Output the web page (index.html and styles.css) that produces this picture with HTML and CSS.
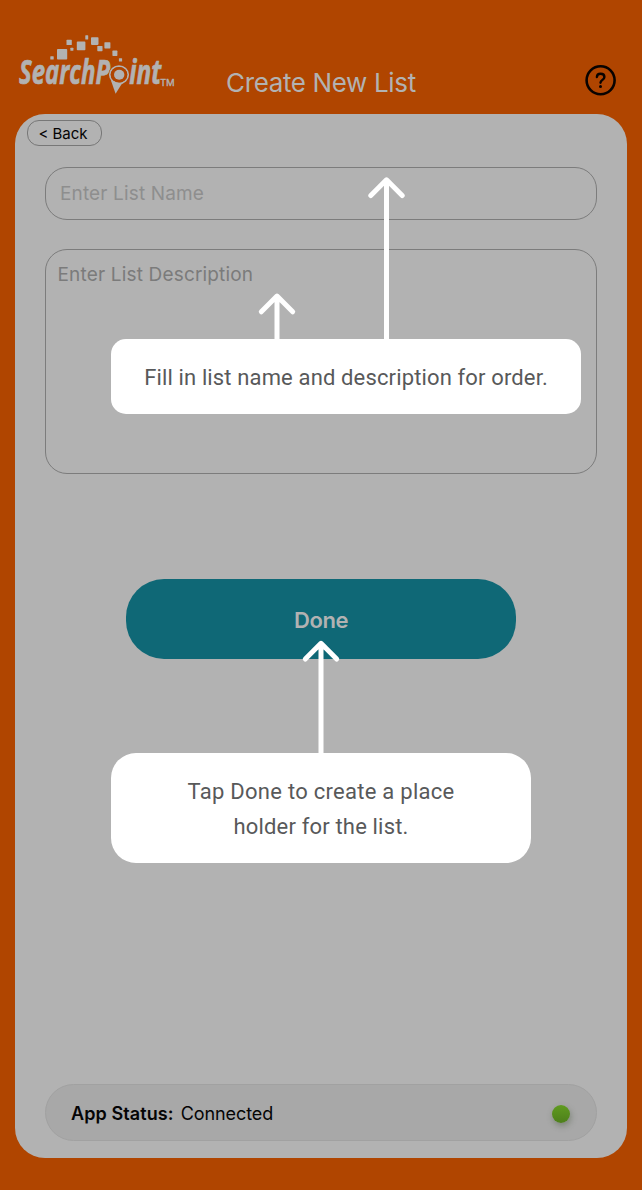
FILE: index.html
```html
<!DOCTYPE html>
<html lang="en">
<head>
<meta charset="utf-8">
<title>Create New List</title>
<link rel="stylesheet" href="styles.css">
</head>
<body>
<div class="app">
  <header class="header">
    <svg class="logo" width="170" height="80" viewBox="10 25 170 80" role="img" aria-label="SearchPoint">
      <g fill="#b2b2b2">
        <rect x="50.3" y="56.2" width="3.4" height="3.4" rx=".5"/>
        <rect x="57" y="49" width="10.2" height="10.6" rx=".8"/>
        <rect x="66.5" y="39.8" width="5.3" height="5.3" rx=".6"/>
        <rect x="70.4" y="47.7" width="3" height="3" rx=".5"/>
        <rect x="76.8" y="41.6" width="8.6" height="8.6" rx=".8"/>
        <rect x="85.3" y="35.3" width="2.9" height="4.3" rx=".5"/>
        <rect x="91" y="37.3" width="7.5" height="7.6" rx=".8"/>
        <rect x="97.3" y="46" width="5.2" height="5.2" rx=".6"/>
        <rect x="104.4" y="42.2" width="6" height="6.2" rx=".6"/>
        <rect x="112.4" y="50.6" width="5" height="5.3" rx=".6"/>
        <rect x="118.9" y="58.2" width="3.2" height="3.2" rx=".5"/>
        <text class="logo-word"><tspan x="19" y="84" textLength="91" lengthAdjust="spacingAndGlyphs">SearchP</tspan><tspan x="129.3" y="84" textLength="32" lengthAdjust="spacingAndGlyphs">int</tspan><tspan class="logo-mark" x="160.6" y="86" textLength="14" lengthAdjust="spacingAndGlyphs">TM</tspan></text>
      </g>
      <ellipse cx="119" cy="74.8" rx="10.6" ry="10" fill="#b04500"/>
      <ellipse cx="119" cy="74.8" rx="9.2" ry="8.7" fill="#b04500" stroke="#b2b2b2" stroke-width="1.7"/>
      <path d="M110.8 80 115.6 93.8 122.2 83.2Z" fill="#b2b2b2"/>
      <ellipse cx="119" cy="74.8" rx="8.2" ry="7.7" fill="#b04500"/>
      <ellipse cx="119.2" cy="74.8" rx="5.2" ry="5" fill="#b2b2b2"/>
    </svg>
    <h1 class="title">Create New List</h1>
    <svg class="help" width="32" height="32" viewBox="0 0 32 32" fill="none" stroke="#090300" stroke-width="2.6" stroke-linecap="round" role="img" aria-label="Help">
      <circle cx="15.6" cy="16.2" r="14"/>
      <path stroke-width="2.4" d="M11.9 13C12 10.8 13.5 9.8 15.5 9.8s3.9 1.1 3.9 3.2c0 2.8-3.7 2.9-3.9 5.7"/>
      <circle cx="15.5" cy="22.6" r="1.5" fill="#090300" stroke="none"/>
    </svg>
  </header>
  <main class="card">
    <button class="back">&lt; Back</button>
    <div class="field name">Enter List Name</div>
    <div class="field description">Enter List Description</div>
    <button class="done">Done</button>
    <div class="status"><b>App Status:</b><span class="state">Connected</span><i class="dot"></i></div>
  </main>
  <svg class="arrows" width="642" height="1190" viewBox="0 0 642 1190" aria-hidden="true">
    <path d="M386.5 342V180M370.8 195.5 386.5 179.8 402.2 195.5"/>
    <path d="M277 342V297M261.3 311.8 277 296.1 292.7 311.8"/>
    <path d="M321 756V644M305.3 659 321 643.3 336.7 659"/>
  </svg>
  <div class="callout callout-fields"><span>Fill in list name and description for order.</span></div>
  <div class="callout callout-done"><span class="line-one">Tap Done to create a place</span><span class="line-two">holder for the list.</span></div>
</div>
</body>
</html>
```
FILE: styles.css
```css
* { box-sizing: border-box; }
body { margin: 0; }
.app {
  position: relative;
  width: 642px;
  height: 1190px;
  padding: 0 15px 32px;
  background: #b04500;
  font-family: Inter, sans-serif;
  display: flex;
  flex-direction: column;
}
.header {
  height: 114px;
  flex: none;
  display: grid;
  grid-template-columns: 170px 1fr 32px;
  align-items: start;
  margin-left: -5px;
  margin-right: -4px;
  padding-right: 14px;
}
.logo { margin-top: 25px; }
.logo-word { font: italic 700 34.5px "Open Sans", sans-serif; stroke: #b2b2b2; stroke-width: .7px; }
.logo-mark { font: 9px "Open Sans", sans-serif; stroke-width: .4px; }
.title {
  margin: 66px 0 0 46px;
  font-size: 26px;
  line-height: 33px;
  font-weight: 400;
  letter-spacing: -.36px;
  color: #b2b2b2;
  white-space: nowrap;
}
.help { margin-top: 64px; }
.card {
  flex: 1;
  border-radius: 30px;
  background: #b2b2b2;
  padding: 6px 30px 17px;
  display: flex;
  flex-direction: column;
}
button { font-family: inherit; padding: 0; }
.back {
  width: 75px;
  height: 26px;
  flex: none;
  margin-left: -18px;
  padding-right: 3px;
  border: 1px solid #777;
  border-radius: 12px;
  background: transparent;
  color: #050505;
  font-size: 15px;
}
.field {
  flex: none;
  border: 1px solid #7c7c7c;
  border-radius: 22px;
  font-size: 19px;
  line-height: 24px;
  letter-spacing: .14px;
}
.name { height: 53px; margin-top: 21px; padding: 14px; color: #8e8e8e; }
.description { height: 225px; margin-top: 29px; padding: 13px 11.5px; color: #7b7b7b; letter-spacing: .17px; }
.done {
  flex: none;
  width: 390px;
  height: 80px;
  margin: 105px auto 0;
  padding-top: 1px;
  border: 0;
  border-radius: 38px;
  background: #0f6876;
  color: #b2b2b2;
  font-size: 22px;
  font-weight: 600;
  letter-spacing: -.4px;
}
.status {
  height: 57px;
  margin-top: auto;
  border: 1px solid #a1a1a1;
  border-radius: 29px;
  background: #a8a8a8;
  display: flex;
  align-items: center;
  padding: 2px 26px 0 25px;
  font-size: 18px;
  color: #050505;
}
.status b { font-weight: 600; letter-spacing: .1px; }
.state { margin-left: 7px; letter-spacing: -.08px; }
.dot {
  width: 18px;
  height: 18px;
  margin: 0 0 0 auto;
  border-radius: 50%;
  background: linear-gradient(#609b20, #4d7f1b);
  box-shadow: 1px 3px 6px rgba(60, 80, 50, .4);
}
.arrows { position: absolute; left: 0; top: 0; fill: none; stroke: #fff; stroke-width: 5; stroke-linecap: round; stroke-linejoin: round; }
.callout {
  position: absolute;
  left: 111px;
  padding-top: 2px;
  background: #fff;
  color: #58595a;
  font: 22px/35px Roboto, sans-serif;
  display: flex;
  flex-direction: column;
  align-items: center;
  justify-content: center;
  white-space: nowrap;
  letter-spacing: .14px;
}
.callout-fields { top: 339.4px; width: 470px; height: 75px; border-radius: 15px; }
.callout-done { top: 753.4px; width: 420px; height: 110px; border-radius: 25px; }
.line-one { letter-spacing: .27px; }
.line-two { letter-spacing: .17px; }
```
